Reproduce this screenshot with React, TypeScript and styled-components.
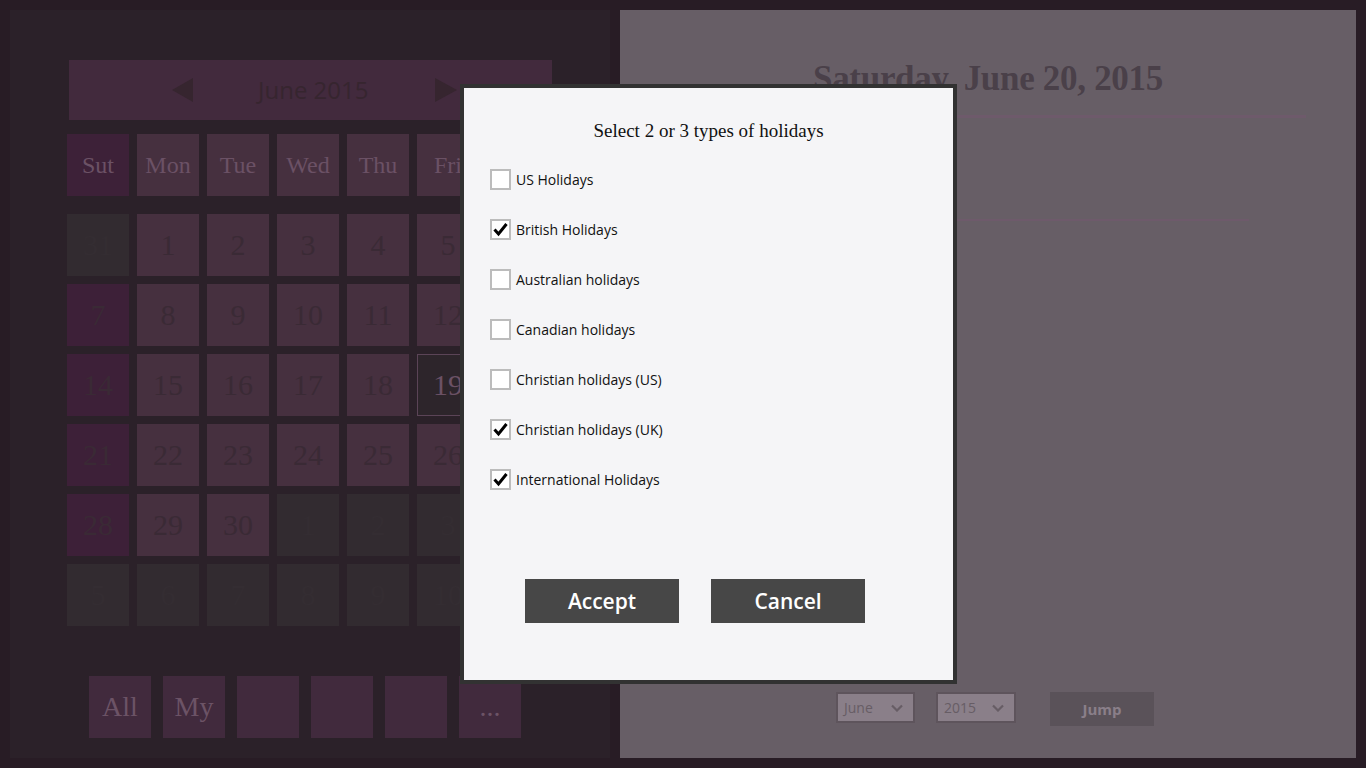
import React from "react";
import styled, { createGlobalStyle } from "styled-components";

const Global = createGlobalStyle`
  html, body { margin: 0; padding: 0; }
  body {
    background: #281c25;
    width: 1366px;
    height: 768px;
    overflow: hidden;
  }
`;

const SERIF = `"Liberation Serif", "DejaVu Serif", serif`;
const SANS = `"Open Sans", "Noto Sans", "DejaVu Sans", sans-serif`;

const Screen = styled.div`
  position: relative;
  box-sizing: border-box;
  width: 1366px;
  height: 768px;
  padding: 10px;
  display: flex;
  gap: 10px;
`;

const LeftPanel = styled.section`
  width: 600px;
  flex: none;
  background: #2b2129;
  box-sizing: border-box;
  padding: 50px 0 0 57px;
  display: flex;
  flex-direction: column;
  overflow: hidden;
`;

const MonthBar = styled.div`
  margin-left: 2px;
  width: 483px;
  height: 60px;
  background: #422a3d;
  display: flex;
  align-items: center;
  box-sizing: border-box;
  padding-left: 103px;
`;

const MonthLabel = styled.span`
  font-family: ${SANS};
  font-size: 24px;
  color: #36252f;
  margin: 0 67px 0 65px;
  line-height: 1;
`;

const Arrow = styled.svg`
  display: block;
  flex: none;
`;

const WeekRow = styled.div`
  margin-top: 14px;
  display: grid;
  grid-template-columns: repeat(7, 62px);
  gap: 8px;
`;

const WeekCell = styled.div<{ $sun?: boolean }>`
  height: 62px;
  background: ${(p) => (p.$sun ? "#3d2138" : "#46303f")};
  display: flex;
  align-items: center;
  justify-content: center;
  font-family: ${SERIF};
  font-size: 24px;
  color: #6b5165;
`;

const DayGrid = styled.div`
  margin-top: 18px;
  display: grid;
  grid-template-columns: repeat(7, 62px);
  grid-auto-rows: 62px;
  gap: 8px;
`;

type Kind = "other" | "month" | "sun" | "today";

const DayCell = styled.div<{ $kind: Kind }>`
  box-sizing: border-box;
  display: flex;
  align-items: center;
  justify-content: center;
  font-family: ${SERIF};
  font-size: 30px;
  background: ${(p) =>
    p.$kind === "other"
      ? "#322b30"
      : p.$kind === "sun"
      ? "#3d2038"
      : p.$kind === "today"
      ? "#2d252b"
      : "#46303f"};
  color: ${(p) =>
    p.$kind === "other" ? "#342d32" : p.$kind === "today" ? "#6b5165" : "#3a2a35"};
  border: ${(p) => (p.$kind === "today" ? "1px solid #5b4457" : "none")};
`;

const CategoryBar = styled.div`
  margin-top: 50px;
  margin-left: 22px;
  display: flex;
  gap: 12px;
`;

const CategoryButton = styled.div`
  width: 62px;
  height: 62px;
  background: #412a3d;
  display: flex;
  align-items: center;
  justify-content: center;
  font-family: ${SERIF};
  font-size: 28px;
  color: #6c5366;
`;

const RightPanel = styled.section`
  flex: 1;
  background: #675e66;
  display: flex;
  flex-direction: column;
  align-items: center;
  box-sizing: border-box;
  padding-top: 47px;
`;

const DateTitle = styled.h1`
  margin: 0;
  font-family: ${SERIF};
  font-weight: bold;
  font-size: 35px;
  line-height: 44px;
  color: #4a4049;
  letter-spacing: -0.3px;
`;

const Rule = styled.div<{ $w: number; $h: number; $top: number }>`
  width: ${(p) => p.$w}px;
  height: ${(p) => p.$h}px;
  margin-top: ${(p) => p.$top}px;
  background: #6e5a6b;
`;

const JumpRow = styled.div`
  margin-top: auto;
  align-self: stretch;
  display: flex;
  align-items: flex-start;
  padding: 0 0 32px 216px;
`;

const Select = styled.div<{ $w: number; $gap: number }>`
  box-sizing: border-box;
  width: ${(p) => p.$w}px;
  height: 31px;
  margin-right: ${(p) => p.$gap}px;
  border: 2px solid #5e545c;
  background: #8a7f89;
  display: flex;
  align-items: center;
  justify-content: space-between;
  padding: 0 10px 0 6px;
  font-family: ${SANS};
  font-size: 14px;
  color: #675d65;
`;

const JumpButton = styled.div`
  width: 104px;
  height: 34px;
  background: #5a5259;
  display: flex;
  align-items: center;
  justify-content: center;
  font-family: ${SANS};
  font-weight: 700;
  font-size: 15px;
  color: #8a7f89;
`;

const Dialog = styled.div`
  position: absolute;
  left: 460px;
  top: 84px;
  width: 497px;
  height: 600px;
  box-sizing: border-box;
  border: 4px solid #323232;
  background: #f5f5f7;
  display: flex;
  flex-direction: column;
  padding: 31px 0 0 26px;
`;

const DialogTitle = styled.h2`
  margin: 0 0 0 -26px;
  text-align: center;
  font-family: ${SERIF};
  font-weight: normal;
  font-size: 19px;
  line-height: 24px;
  color: #111;
`;

const OptionList = styled.div`
  margin-top: 26px;
  display: flex;
  flex-direction: column;
  gap: 29px;
`;

const Option = styled.label`
  display: flex;
  align-items: center;
  gap: 5px;
  height: 21px;
  font-family: ${SANS};
  font-size: 14px;
  color: #111;
`;

const Box = styled.span`
  box-sizing: border-box;
  width: 21px;
  height: 21px;
  border: 2px solid #bcbcbc;
  background: #fff;
  display: flex;
  align-items: center;
  justify-content: center;
  flex: none;
`;

const ButtonRow = styled.div`
  margin-top: 89px;
  margin-left: 35px;
  display: flex;
  gap: 32px;
`;

const DialogButton = styled.div`
  width: 154px;
  height: 44px;
  background: #474747;
  display: flex;
  align-items: center;
  justify-content: center;
  font-family: ${SANS};
  font-weight: 600;
  font-size: 21px;
  color: #fff;
`;

const Check = () => (
  <svg width="17" height="17" viewBox="0 0 17 17">
    <path d="M2.5 8.5 L6.5 13 L14.5 3" fill="none" stroke="#000" strokeWidth="3" />
  </svg>
);

const Chevron = () => (
  <svg width="12" height="8" viewBox="0 0 12 8">
    <path d="M1 1.5 L6 6.5 L11 1.5" fill="none" stroke="#675d65" strokeWidth="2.2" />
  </svg>
);

const weekdays = ["Sut", "Mon", "Tue", "Wed", "Thu", "Fri", "Sat"];

type Day = { n: number; kind: Kind };
const buildDays = (): Day[] => {
  const days: Day[] = [{ n: 31, kind: "other" }];
  for (let d = 1; d <= 30; d++) {
    const col = d % 7;
    days.push({ n: d, kind: d === 19 ? "today" : col === 0 ? "sun" : "month" });
  }
  for (let d = 1; d <= 11; d++) days.push({ n: d, kind: "other" });
  return days;
};

const options: [string, boolean][] = [
  ["US Holidays", false],
  ["British Holidays", true],
  ["Australian holidays", false],
  ["Canadian holidays", false],
  ["Christian holidays (US)", false],
  ["Christian holidays (UK)", true],
  ["International Holidays", true],
];

export default function App() {
  const days = buildDays();
  return (
    <>
      <Global />
      <Screen>
        <LeftPanel>
          <MonthBar>
            <Arrow width="21" height="24" viewBox="0 0 21 24">
              <path d="M21 0 L0 12 L21 24 Z" fill="#36252f" />
            </Arrow>
            <MonthLabel>June 2015</MonthLabel>
            <Arrow width="22" height="24" viewBox="0 0 22 24">
              <path d="M0 0 L22 12 L0 24 Z" fill="#36252f" />
            </Arrow>
          </MonthBar>
          <WeekRow>
            {weekdays.map((w, i) => (
              <WeekCell key={w} $sun={i === 0}>
                {w}
              </WeekCell>
            ))}
          </WeekRow>
          <DayGrid>
            {days.map((d, i) => (
              <DayCell key={i} $kind={d.kind}>
                {d.n}
              </DayCell>
            ))}
          </DayGrid>
          <CategoryBar>
            <CategoryButton>All</CategoryButton>
            <CategoryButton>My</CategoryButton>
            <CategoryButton />
            <CategoryButton />
            <CategoryButton />
            <CategoryButton>...</CategoryButton>
          </CategoryBar>
        </LeftPanel>
        <RightPanel>
          <DateTitle>Saturday, June 20, 2015</DateTitle>
          <Rule $w={636} $h={3} $top={14} />
          <Rule $w={522} $h={2} $top={101} />
          <JumpRow>
            <Select $w={79} $gap={21}>
              June
              <Chevron />
            </Select>
            <Select $w={80} $gap={34}>
              2015
              <Chevron />
            </Select>
            <JumpButton>Jump</JumpButton>
          </JumpRow>
        </RightPanel>
        <Dialog>
          <DialogTitle>Select 2 or 3 types of holidays</DialogTitle>
          <OptionList>
            {options.map(([label, on]) => (
              <Option key={label}>
                <Box>{on && <Check />}</Box>
                {label}
              </Option>
            ))}
          </OptionList>
          <ButtonRow>
            <DialogButton>Accept</DialogButton>
            <DialogButton>Cancel</DialogButton>
          </ButtonRow>
        </Dialog>
      </Screen>
    </>
  );
}
